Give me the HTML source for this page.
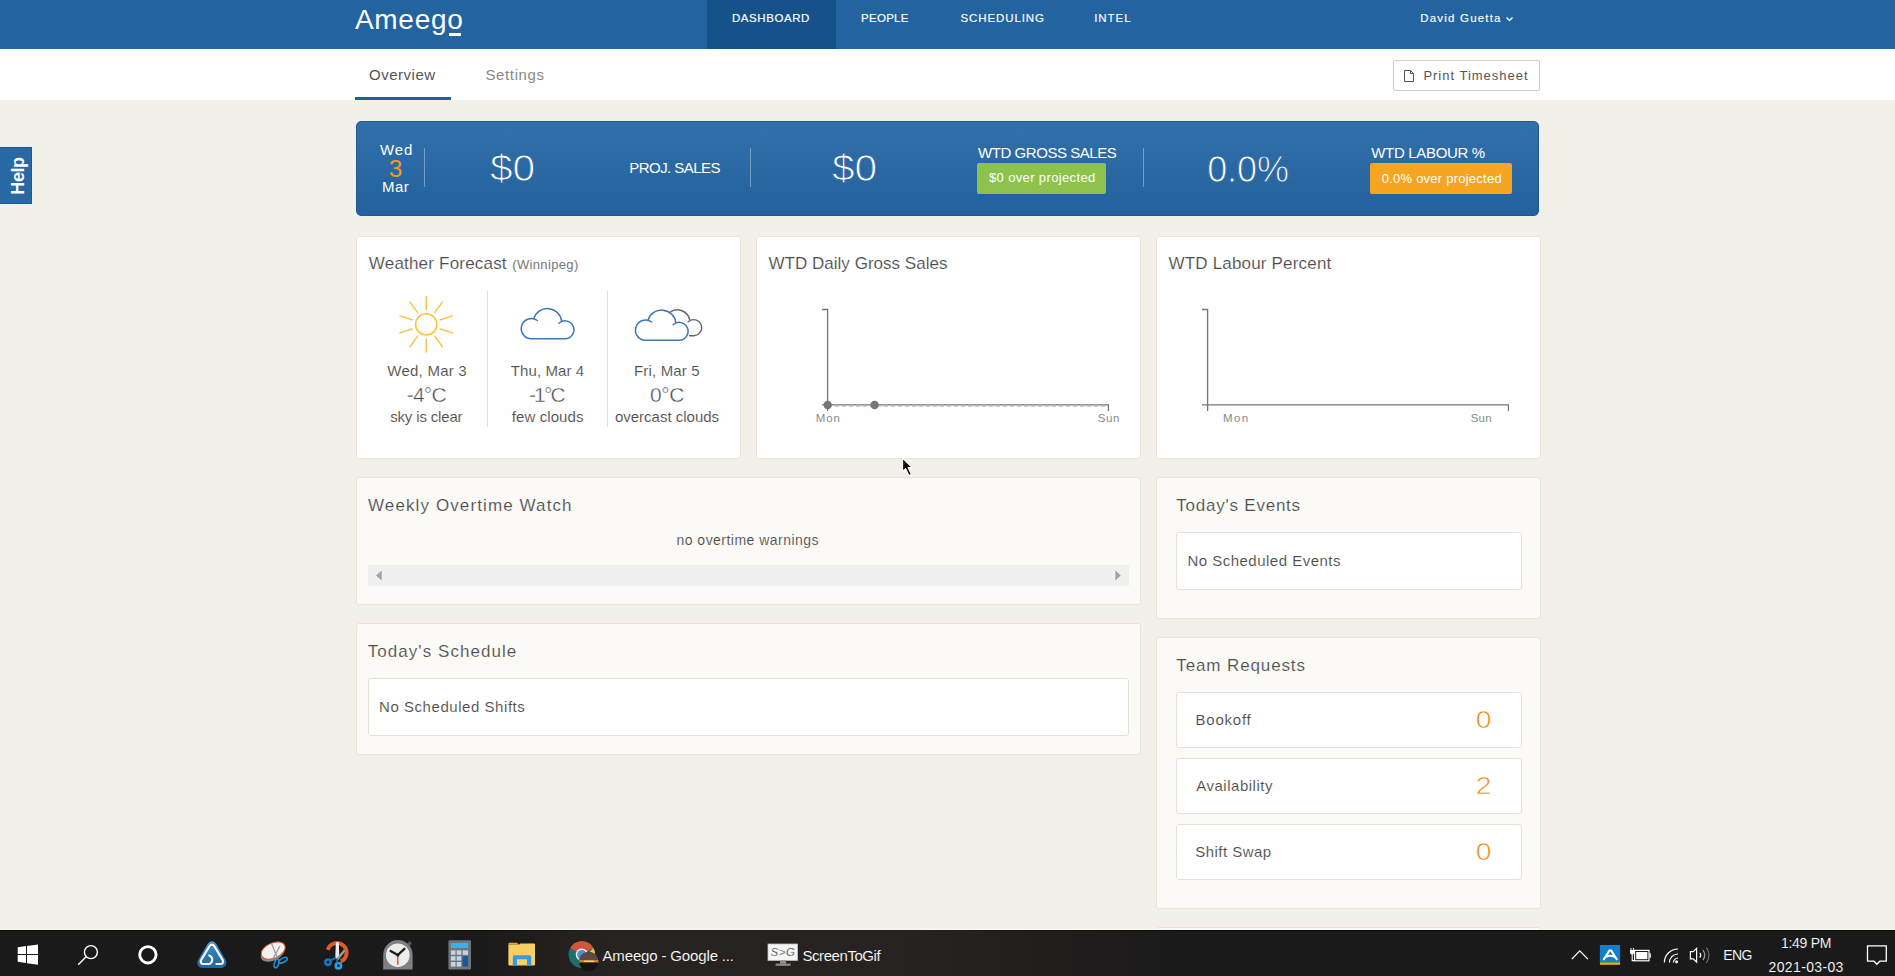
<!DOCTYPE html>
<html lang="en">
<head>
<meta charset="utf-8">
<title>Ameego</title>
<style>
*{box-sizing:border-box;margin:0;padding:0}
html,body{width:1895px;height:976px;overflow:hidden;background:#f3f0ea;font-family:"Liberation Sans",sans-serif;color:#555}
#root{position:relative;width:1895px;height:976px;overflow:hidden;background:#f3f0ea}
.abs{position:absolute;white-space:nowrap;line-height:1}
/* header */
#hdr{position:absolute;left:0;top:0;width:1895px;height:49px;background:#23639f}
#hdr .active{position:absolute;left:707px;top:0;width:129px;height:49px;background:#15528a}
.nav{color:#fff;font-size:11.5px;letter-spacing:1px;top:13px;-webkit-text-stroke:.15px #fff}
#logo{color:#fff;font-size:28px}
#logo-u{position:absolute;left:449px;top:33.3px;width:12px;height:2.5px;background:#fff}
/* subnav */
#sub{position:absolute;left:0;top:49px;width:1895px;height:51px;background:#fff}
#sub .ul{position:absolute;left:355px;top:48px;width:96px;height:3px;background:#1f5f9b}
.tab{font-size:15px;top:18px}
#print{position:absolute;left:1393px;top:11px;width:147px;height:31px;border:1px solid #ccc;border-radius:2px;background:#fff}
/* banner */
#ban{position:absolute;left:356px;top:121px;width:1183px;height:95px;border:1px solid #1d5a95;border-radius:5px;background:linear-gradient(#3170a9,#22619d)}
#ban .abs{color:#fff}
.div{position:absolute;top:26px;width:1px;height:39px;background:rgba(255,255,255,.35)}
.big{font-size:36px;top:28px;-webkit-text-stroke:.9px #2a69a3}
.lbl{font-size:15px}
.badge{position:absolute;height:31px;border-radius:2px;color:#fff;font-size:13px;line-height:31px;text-align:center;white-space:nowrap}
/* panels */
.panel{position:absolute;background:#fefefe;border:1px solid #e9e4d9;border-radius:3px}
.panel2{position:absolute;background:#fbfaf7;border:1px solid #e9e4d9;border-radius:3px}
.h{font-size:17px;color:#4c4c4c;letter-spacing:.6px;-webkit-text-stroke:.15px #fcfbf9}
.box{position:absolute;background:#fff;border:1px solid #e6e1d7;border-radius:3px}
.num{color:#e68b14;font-size:24px;-webkit-text-stroke:.6px #fff;transform:scaleX(1.18);transform-origin:50% 50%}
.wd{font-size:15px;color:#4e4b49;letter-spacing:.3px;-webkit-text-stroke:.12px #fefefe}
.wt{font-size:21px;color:#4a4a4a;-webkit-text-stroke:.4px #fefefe}
.ax{font-size:11.5px;color:#8a8a8a;letter-spacing:.4px}
.bt{font-size:15px;color:#4e4b49;letter-spacing:.5px;-webkit-text-stroke:.12px #fdfdfc}
/* taskbar */
#tb{position:absolute;left:0;top:930px;width:1895px;height:46px;background:#1b1a1a}
#tb .abs{color:#fff;-webkit-text-stroke:.12px #201e1d}
</style>
</head>
<body>
<div id="root">

<!-- HEADER -->
<div id="hdr">
  <div class="active"></div>
  <div id="logo" class="abs" style="left:354.9px;top:5.5px;letter-spacing:0.74px">Ameego</div>
  <div id="logo-u"></div>
  <div id="nv1" class="abs nav" style="left:732px;letter-spacing:0.56px">DASHBOARD</div>
  <div id="nv2" class="abs nav" style="left:861px;letter-spacing:0.28px">PEOPLE</div>
  <div id="nv3" class="abs nav" style="left:960.4px;letter-spacing:0.91px">SCHEDULING</div>
  <div id="nv4" class="abs nav" style="left:1094.2px;letter-spacing:0.94px">INTEL</div>
  <div id="usr" class="abs nav" style="left:1420.2px;letter-spacing:1.2px">David Guetta</div>
  <svg class="abs" style="left:1505px;top:15px" width="9" height="8" viewBox="0 0 9 8"><path d="M1.5 2.5 L4.5 5.5 L7.5 2.5" fill="none" stroke="#fff" stroke-width="1.4"/></svg>
</div>

<!-- SUBNAV -->
<div id="sub">
  <div id="tb1" class="abs tab" style="left:369px;color:#555;letter-spacing:0.51px">Overview</div>
  <div id="tb2" class="abs tab" style="left:485.4px;color:#888;letter-spacing:0.64px">Settings</div>
  <div class="ul"></div>
  <div id="print">
    <svg class="abs" style="left:9px;top:8px" width="12" height="14" viewBox="0 0 12 14"><path d="M1.5 1.5 H7.5 L10.5 4.5 V12.5 H1.5 Z M7.5 1.5 V4.5 H10.5" fill="none" stroke="#555" stroke-width="1"/></svg>
    <div id="pt" class="abs" style="left:29.4px;top:8px;font-size:13px;color:#555;letter-spacing:0.99px">Print Timesheet</div>
  </div>
</div>

<!-- HELP -->
<div style="position:absolute;left:0;top:147px;width:32px;height:57px;background:#2868a4;border:1px solid #1d5a95;border-left:0"></div>
<div class="abs" style="left:0;top:147px;width:32px;height:57px"><div id="help" style="position:absolute;left:17.5px;top:28.5px;transform:translate(-50%,-50%) rotate(-90deg);color:#fff;font-weight:bold;font-size:18px;letter-spacing:-.4px;line-height:1">Help</div></div>

<!-- BANNER -->
<div id="ban">
  <div id="d1" class="abs lbl" style="left:23px;top:20px;letter-spacing:0.9px">Wed</div>
  <div id="d2" class="abs" style="left:32px;top:35px;font-size:24px;color:#f39a1e;letter-spacing:0px">3</div>
  <div id="d3" class="abs lbl" style="left:25px;top:57px;letter-spacing:0.45px">Mar</div>
  <div class="div" style="left:67px"></div>
  <div id="b1" class="abs big" style="left:133px;letter-spacing:0px;transform:scaleX(1.13);transform-origin:0 0;top:29px">$0</div>
  <div id="b2" class="abs lbl" style="left:272.3px;top:38px;letter-spacing:-0.55px">PROJ. SALES</div>
  <div class="div" style="left:393px"></div>
  <div id="b3" class="abs big" style="left:475px;letter-spacing:0px;transform:scaleX(1.13);transform-origin:0 0;top:29px">$0</div>
  <div id="b4" class="abs lbl" style="left:621.1px;top:22.5px;letter-spacing:-0.45px">WTD GROSS SALES</div>
  <div class="badge" style="left:620px;top:41px;width:129px;background:#8dc34c"></div><div id="g1" class="abs" style="left:632px;top:49px;font-size:13px;letter-spacing:0.36px">$0 over projected</div>
  <div class="div" style="left:786px"></div>
  <div id="b5" class="abs big" style="left:850.2px;letter-spacing:-0.1px;top:30px">0.0%</div>
  <div id="b6" class="abs lbl" style="left:1014.3px;top:22.5px;letter-spacing:-0.33px">WTD LABOUR %</div>
  <div class="badge" style="left:1013px;top:41px;width:142px;background:#f6a521"></div><div id="g2" class="abs" style="left:1024.7px;top:50px;font-size:13px;letter-spacing:0.24px">0.0% over projected</div>
</div>

<!-- ROW 1 PANELS -->
<div class="panel" style="left:356px;top:236px;width:385px;height:223px"></div>
<div class="panel" style="left:756px;top:236px;width:385px;height:223px"></div>
<div class="panel" style="left:1156px;top:236px;width:385px;height:223px"></div>
<div id="t1" class="abs h" style="left:368.8px;top:255px;letter-spacing:0.2px">Weather Forecast</div>
<div id="t1b" class="abs" style="left:512.2px;top:258px;font-size:13px;color:#777;letter-spacing:0.36px">(Winnipeg)</div>
<div id="t2" class="abs h" style="left:768.5px;top:255px;letter-spacing:0.02px">WTD Daily Gross Sales</div>
<div id="t3" class="abs h" style="left:1168.5px;top:255px;letter-spacing:0.18px">WTD Labour Percent</div>

<!-- weather -->
<div style="position:absolute;left:487px;top:291px;width:1px;height:136px;background:#e6dfd2"></div>
<div style="position:absolute;left:607px;top:291px;width:1px;height:136px;background:#e6dfd2"></div>
<svg class="abs" style="left:356px;top:237px" width="385" height="222" viewBox="356 237 385 222" fill="none" stroke-linecap="round">
  <g stroke="#f6c544" stroke-width="1.5">
    <circle cx="426.2" cy="324.4" r="10.6"/>
    <path d="M426.2 309.6 L426.2 296.8 M434.9 312.4 L442.4 302.1 M440.3 319.8 L452.4 315.9 M440.3 329.0 L452.4 332.9 M434.9 336.4 L442.4 346.7 M426.2 339.2 L426.2 352.0 M417.5 336.4 L410.0 346.7 M412.1 329.0 L400.0 332.9 M412.1 319.8 L400.0 315.9 M417.5 312.4 L410.0 302.1"/>
  </g>
  <g stroke="#3c78b4" stroke-width="1.5">
    <path id="cl" d="M537.4 320.5 A10.1 10.1 0 1 0 531.3 338.7 H564.9 A8.9 8.9 0 1 0 558.9 323.3 M533.8 318.7 A14.3 14.3 0 0 1 561.7 321.5"/>
  </g>
  <g stroke="#6b6767" stroke-width="1.4">
    <path d="M669.8 312.4 A12.7 12.7 0 0 1 689.8 320.1 M688.2 321.8 A8 8 0 1 1 693.6 335.7 H689.5"/>
  </g>
  <g stroke="#3c78b4" stroke-width="1.5" transform="translate(114.2 1.5)">
    <path d="M537.4 320.5 A10.1 10.1 0 1 0 531.3 338.7 H564.9 A8.9 8.9 0 1 0 558.9 323.3 M533.8 318.7 A14.3 14.3 0 0 1 561.7 321.5"/>
  </g>
</svg>
<div id="w1a" class="abs wd" style="left:387.3px;top:363px;letter-spacing:0.24px">Wed, Mar 3</div>
<div id="w1b" class="abs wt" style="left:406.7px;top:384px;letter-spacing:-0.78px">-4°C</div>
<div id="w1c" class="abs wd" style="left:390.2px;top:409px;letter-spacing:-0.16px">sky is clear</div>
<div id="w2a" class="abs wd" style="left:510.8px;top:363px;letter-spacing:0.08px">Thu, Mar 4</div>
<div id="w2b" class="abs wt" style="left:528.9px;top:384px;letter-spacing:-1.8px">-1°C</div>
<div id="w2c" class="abs wd" style="left:511.8px;top:409px;letter-spacing:0.09px">few clouds</div>
<div id="w3a" class="abs wd" style="left:634px;top:363px;letter-spacing:0.16px">Fri, Mar 5</div>
<div id="w3b" class="abs wt" style="left:649.9px;top:384px;letter-spacing:-0.4px">0°C</div>
<div id="w3c" class="abs wd" style="left:614.9px;top:409px;letter-spacing:0px">overcast clouds</div>

<!-- charts -->
<svg class="abs" style="left:756px;top:237px" width="785" height="222" viewBox="756 237 785 222" fill="none">
  <g stroke="#777" stroke-width="1.3">
    <path d="M822 309.5 H827.6 V411 M822 404.8 H1108.4 V411"/>
    <path d="M1202 309.5 H1207.6 V411 M1202 404.8 H1508.4 V411"/>
  </g>
  <path d="M828 406.2 H1108" stroke="#8fb3d6" stroke-width="1" stroke-dasharray="4 3" opacity=".8"/>
  <circle cx="827.7" cy="405" r="4.2" fill="#777"/>
  <circle cx="874.6" cy="405" r="4.2" fill="#777"/>
</svg>
<div id="c1a" class="abs ax" style="left:815.8px;top:412.5px;letter-spacing:0.91px">Mon</div>
<div id="c1b" class="abs ax" style="left:1097.7px;top:412.5px;letter-spacing:0.6px">Sun</div>
<div id="c2a" class="abs ax" style="left:1223.1px;top:413px;letter-spacing:1.39px">Mon</div>
<div id="c2b" class="abs ax" style="left:1470.7px;top:413px;letter-spacing:0.22px">Sun</div>

<!-- ROW 2 -->
<div class="panel2" style="left:356px;top:477px;width:785px;height:128px"></div>
<div id="t4" class="abs h" style="left:368px;top:497px;letter-spacing:1.11px">Weekly Overtime Watch</div>
<div id="ot" class="abs bt" style="left:676.5px;top:533px;font-size:14px;letter-spacing:0.47px">no overtime warnings</div>
<div style="position:absolute;left:368px;top:565px;width:761px;height:21px;background:#f0f0f0"></div>
<svg class="abs" style="left:368px;top:565px" width="761" height="21" viewBox="368 565 761 21"><path d="M376 575.5 L381.7 570.5 V580.5 Z M1120.8 575.5 L1115.3 570.5 V580.5 Z" fill="#a3a3a3"/></svg>

<div class="panel2" style="left:1156px;top:477px;width:385px;height:142px"></div>
<div id="t5" class="abs h" style="left:1176.3px;top:497px;letter-spacing:0.77px">Today's Events</div>
<div class="box" style="left:1176px;top:532px;width:346px;height:58px"></div>
<div id="ev" class="abs bt" style="left:1187.4px;top:553px;letter-spacing:0.49px">No Scheduled Events</div>

<div class="panel2" style="left:356px;top:623px;width:785px;height:132px"></div>
<div id="t6" class="abs h" style="left:367.7px;top:643px;letter-spacing:1.06px">Today's Schedule</div>
<div class="box" style="left:368px;top:678px;width:761px;height:58px"></div>
<div id="sh" class="abs bt" style="left:379px;top:699px;letter-spacing:0.55px">No Scheduled Shifts</div>

<div class="panel2" style="left:1156px;top:637px;width:385px;height:272px"></div>
<div id="t7" class="abs h" style="left:1176.3px;top:657px;letter-spacing:0.88px">Team Requests</div>
<div class="box" style="left:1176px;top:692px;width:346px;height:56px"></div>
<div class="box" style="left:1176px;top:758px;width:346px;height:56px"></div>
<div class="box" style="left:1176px;top:824px;width:346px;height:56px"></div>
<div id="r1" class="abs bt" style="left:1195.5px;top:712px;letter-spacing:0.78px">Bookoff</div>
<div id="r2" class="abs bt" style="left:1196.2px;top:778px;letter-spacing:0.52px">Availability</div>
<div id="r3" class="abs bt" style="left:1195.3px;top:844px;letter-spacing:0.46px">Shift Swap</div>
<div id="n1" class="abs num" style="left:1476.9px;top:708px;letter-spacing:0px">0</div>
<div id="n2" class="abs num" style="left:1476.9px;top:773.5px;letter-spacing:0px">2</div>
<div id="n3" class="abs num" style="left:1476.9px;top:840px;letter-spacing:0px">0</div>
<div class="panel2" style="left:1156px;top:927px;width:385px;height:60px"></div>

<!-- CURSOR -->
<svg class="abs" style="left:898px;top:454px" width="20" height="26" viewBox="898 455 20 26"><path d="M902.6 459.2 V472.4 L905.6 469.6 L908.9 476.6 L911.4 475.5 L908.1 468.6 H912.2 Z" fill="#0b0b0b" stroke="#fff" stroke-width="1.1" stroke-linejoin="round"/></svg>

<!-- TASKBAR -->
<div style="position:absolute;left:0;top:929px;width:1895px;height:1px;background:#faf8f5"></div>
<div id="tb">
<div style="position:absolute;left:0;top:0;width:1895px;height:1px;background:#0b0b0b"></div>
<div style="position:absolute;left:480px;top:0;width:700px;height:46px;background:linear-gradient(90deg,rgba(42,37,35,0),rgba(42,37,35,.75) 18%,rgba(42,37,35,.75) 60%,rgba(42,37,35,0))"></div>
<svg class="abs" style="left:0;top:0" width="1895" height="46" viewBox="0 930 1895 46">
  <!-- windows -->
  <g fill="#fff">
    <path d="M17.7 947.3 L26 946.1 V954 H17.7 Z M27 945.9 L38 944.4 V954 H27 Z M17.7 955 H26 V963 L17.7 961.8 Z M27 955 H38 V964.8 L27 963.2 Z"/>
  </g>
  <!-- search -->
  <g fill="none" stroke="#fff" stroke-width="1.4">
    <circle cx="90.9" cy="952.1" r="6.5"/>
    <path d="M86.2 956.8 L78.2 964.8"/>
  </g>
  <!-- cortana -->
  <circle cx="147.9" cy="954.8" r="8.2" fill="none" stroke="#fff" stroke-width="2.9"/>
  <!-- ameego launcher -->
  <defs><linearGradient id="lg1" x1="0" y1="0" x2="0" y2="1"><stop offset="0" stop-color="#4a94d6"/><stop offset=".45" stop-color="#2f7cb0"/><stop offset="1" stop-color="#1e66a6"/></linearGradient></defs>
  <g>
    <path d="M211.9 941.2 C214 941.2 215.5 942.5 216.6 944.4 L225.6 959.8 C227.6 963.4 225.6 967.9 221.4 967.9 L202.4 967.9 C198.2 967.9 196.2 963.4 198.2 959.8 L207.2 944.4 C208.3 942.5 209.8 941.2 211.9 941.2 Z" fill="url(#lg1)"/>
    <path d="M209.3 955.4 C211.5 956.5 212.6 959 212 961 C211.4 963.2 210.4 964 208.6 964 H203.4 C201 964 200 961.9 201.2 959.9 L209.6 946 C210.7 944.2 213.1 944.2 214.2 946 L222.6 959.9 C223.8 961.9 222.8 964 220.4 964 H216.4" fill="none" stroke="#f6f4ef" stroke-width="2.2" stroke-linecap="round"/>
  </g>
  <!-- snipping tool -->
  <g>
    <ellipse cx="272.6" cy="953.2" rx="12.6" ry="7.4" transform="rotate(-24 272.6 953.2)" fill="#8c8c8c"/>
    <ellipse cx="273.2" cy="950.6" rx="12.6" ry="7.6" transform="rotate(-24 273.2 950.6)" fill="#f4f2f0" stroke="#d8572b" stroke-width="1"/>
    <path d="M271.5 943.5 L277.5 958 M280 946 L273 958.5" stroke="#9a9a9a" stroke-width="1.3" fill="none"/>
    <ellipse cx="276.6" cy="963.3" rx="2.1" ry="4.6" transform="rotate(18 276.6 963.3)" fill="none" stroke="#1e8fe0" stroke-width="1.6"/>
    <ellipse cx="283.2" cy="960.2" rx="2.1" ry="4.4" transform="rotate(62 283.2 960.2)" fill="none" stroke="#1e8fe0" stroke-width="1.6"/>
  </g>
  <!-- snip & sketch -->
  <g>
    <path d="M327.8 949.8 A9.6 9.6 0 1 1 340.8 961.4" fill="none" stroke="#d95c2b" stroke-width="4"/>
    <path d="M335.9 942.2 L338.9 942.2 L339.2 958.5 L335.2 958.5 Z" fill="#ececec"/>
    <path d="M343.8 949.5 L345.5 951 L338.5 960 L336.4 958.2 Z" fill="#9b9b9b"/>
    <circle cx="328" cy="962.2" r="2.7" fill="none" stroke="#1a74c4" stroke-width="2.5"/>
    <circle cx="338.4" cy="965.8" r="2.7" fill="none" stroke="#26a2f0" stroke-width="2.5"/>
    <path d="M330 960.6 L336 957.6 M337.6 963.4 L337 958.6" stroke="#1a74c4" stroke-width="1.8"/>
  </g>
  <!-- clock -->
  <g>
    <path d="M407 943.6 L409.6 941 L412 943.4 L409.4 946 Z" fill="#5a5a5a"/>
    <path d="M383.2 969.6 V954.8 A14.6 14.6 0 0 1 412.6 954.8 V969.6 Z" fill="#7d8185"/>
    <circle cx="397.8" cy="955.2" r="11.8" fill="#ececea"/>
    <path d="M397.8 955 L390.6 951 M397.8 955 L404.4 948.8" stroke="#1d1d1d" stroke-width="2.3" fill="none" stroke-linecap="round"/>
    <path d="M397.8 955.5 V964.8" stroke="#e2571e" stroke-width="1.5"/>
    <circle cx="397.8" cy="955" r="1.6" fill="#1d1d1d"/>
  </g>
  <!-- calculator -->
  <g>
    <rect x="448.4" y="940.2" width="22.6" height="29.4" rx="1.2" fill="#70757a"/>
    <rect x="450.9" y="943" width="17.2" height="5" fill="#33b5ea"/>
    <g fill="#c3d4e4">
      <rect x="450.9" y="950.4" width="4.6" height="4.4"/><rect x="456.7" y="950.4" width="4.6" height="4.4"/><rect x="462.6" y="950.4" width="5.5" height="4.4"/>
      <rect x="450.9" y="956.2" width="4.6" height="4.4"/><rect x="456.7" y="956.2" width="4.6" height="4.4"/>
      <rect x="450.9" y="962" width="4.6" height="4.6"/><rect x="456.7" y="962" width="4.6" height="4.6"/>
    </g>
    <rect x="462.6" y="956.2" width="5.5" height="10.4" fill="#17589a"/>
  </g>
  <!-- explorer -->
  <g>
    <path d="M508.4 944 Q508.4 942.8 509.6 942.8 H517 L518.6 944.6 H508.4 Z" fill="#f2a51f"/>
    <path d="M508.4 944.6 H519 L520.4 943.6 H534 Q535 943.6 535 944.6 V964.6 Q535 965.6 534 965.6 H509.4 Q508.4 965.6 508.4 964.6 Z" fill="#f8cf63"/>
    <path d="M512.8 965.8 V957 Q512.8 955.2 514.6 955.2 H529.4 Q531.2 955.2 531.2 957 V965.8 H527 V959.2 H517 V965.8 Z" fill="#3a9ae0"/>
  </g>
  <!-- chrome -->
  <g>
    <circle cx="581.8" cy="954.6" r="13.3" fill="#1f6f68"/>
    <path d="M581.8 954.6 L570.3 947.9 A13.3 13.3 0 0 1 593.3 947.9 Z" fill="#d2553a"/>
    <path d="M570.3 947.9 A13.3 13.3 0 0 1 593.3 947.9 L581.8 947.9 Z" fill="#d2553a"/>
    <path d="M593.3 947.9 A13.3 13.3 0 0 1 581.8 967.9 L587 955 Z" fill="#f0c042"/>
    <circle cx="581.8" cy="954.6" r="6.1" fill="#f1f1f1"/>
    <circle cx="581.8" cy="954.6" r="4.7" fill="#4b8fd8"/>
    <circle cx="588.8" cy="961.6" r="9.7" fill="#161312"/>
    <path d="M579.8 958 A9.7 9.7 0 0 1 597.8 958 L598.4 961.2 H579.2 Z" fill="#5d4a45"/>
    <path d="M579.3 960 H598.3 L598.5 962.6 H579.1 Z" fill="#c9812f"/>
    <path d="M584 960.6 H594 V962 H584 Z" fill="#f3c77c"/>
  </g>
  <!-- screentogif -->
  <g>
    <rect x="768" y="944" width="29.6" height="16.4" fill="#f4f4f4" stroke="#c4c4c4" stroke-width=".8"/>
    <rect x="780" y="960.4" width="6" height="3.4" fill="#8d8d8d"/>
    <rect x="775.6" y="963.6" width="15" height="2.2" fill="#8d8d8d"/>
  </g>
  <!-- tray -->
  <path d="M1571.8 959.1 L1579.8 950.9 L1587.9 959.1" fill="none" stroke="#fff" stroke-width="1.3"/>
  <g>
    <rect x="1599.9" y="945" width="20.2" height="17" fill="#167dcb"/>
    <rect x="1599.9" y="961.8" width="20.2" height="1.1" fill="#3fae49"/>
    <rect x="1599.9" y="962.8" width="20.2" height="2" fill="#f6a81c"/>
    <path d="M1603.4 960 L1609.4 950.6 H1611.2 L1617.2 960 M1605.6 957 Q1610.3 954.4 1615 957" fill="none" stroke="#fff" stroke-width="2"/>
  </g>
  <g fill="#fff">
    <rect x="1634.6" y="950.4" width="14.4" height="10.4" fill="none" stroke="#fff" stroke-width="1.2"/>
    <rect x="1636.2" y="952" width="11.2" height="7.2"/>
    <rect x="1649.4" y="953.4" width="1.4" height="4.4"/>
    <path d="M1631 948 V950 M1633.4 948 V950" stroke="#fff" stroke-width="1"/>
    <path d="M1630 950 H1634.4 V952.4 Q1634.4 954.4 1632.2 954.4 Q1630 954.4 1630 952.4 Z"/>
    <path d="M1632.2 954 V960.6 H1634.6" fill="none" stroke="#fff" stroke-width="1.1"/>
  </g>
  <g fill="none" stroke="#fff" stroke-width="1.2">
    <path d="M1673.4 962.6 A4.6 4.6 0 0 1 1678 958"/>
    <path d="M1669.4 962.6 A8.6 8.6 0 0 1 1678 954"/>
    <path d="M1664.4 962.6 A13.6 13.6 0 0 1 1678 949"/>
    <circle cx="1676.6" cy="961.7" r="1.5" fill="#fff" stroke="none"/>
  </g>
  <g fill="none" stroke="#fff" stroke-width="1.2">
    <path d="M1690.4 951.6 H1693.2 L1696.6 948.4 V962 L1693.2 958.8 H1690.4 Z"/>
    <path d="M1699.8 952.8 Q1701.8 955.2 1699.8 957.6"/>
    <path d="M1703 950.2 Q1706.6 955.2 1703 960.2" stroke="#9b9b9b"/>
    <path d="M1706.4 947.6 Q1711.6 955.2 1706.4 962.8" stroke="#6b6b6b"/>
  </g>
  <path d="M1867.5 945.8 H1886.3 V961.2 H1879.8 L1876.9 964.2 L1874 961.2 H1867.5 Z" fill="none" stroke="#fff" stroke-width="1.3"/>
</svg>
<div id="k1" class="abs" style="left:602.5px;top:17.5px;font-size:15px;letter-spacing:-0.15px">Ameego - Google ...</div>
<div id="k2" class="abs" style="left:802.5px;top:17.5px;font-size:15px;letter-spacing:-0.44px">ScreenToGif</div>
<div id="k6" class="abs" style="left:770.5px;top:17px;font-size:11.5px;color:#3a3a3a;font-style:italic;letter-spacing:.6px;-webkit-text-stroke:.2px #f4f4f4">S&gt;G</div>
<div id="k3" class="abs" style="left:1723.2px;top:18px;font-size:14px;letter-spacing:-0.56px">ENG</div>
<div id="k4" class="abs" style="left:1781px;top:6px;font-size:14px;letter-spacing:-0.29px">1:49 PM</div>
<div id="k5" class="abs" style="left:1768.6px;top:29.5px;font-size:14px;letter-spacing:0.35px">2021-03-03</div>
</div>

</div>
</body>
</html>
